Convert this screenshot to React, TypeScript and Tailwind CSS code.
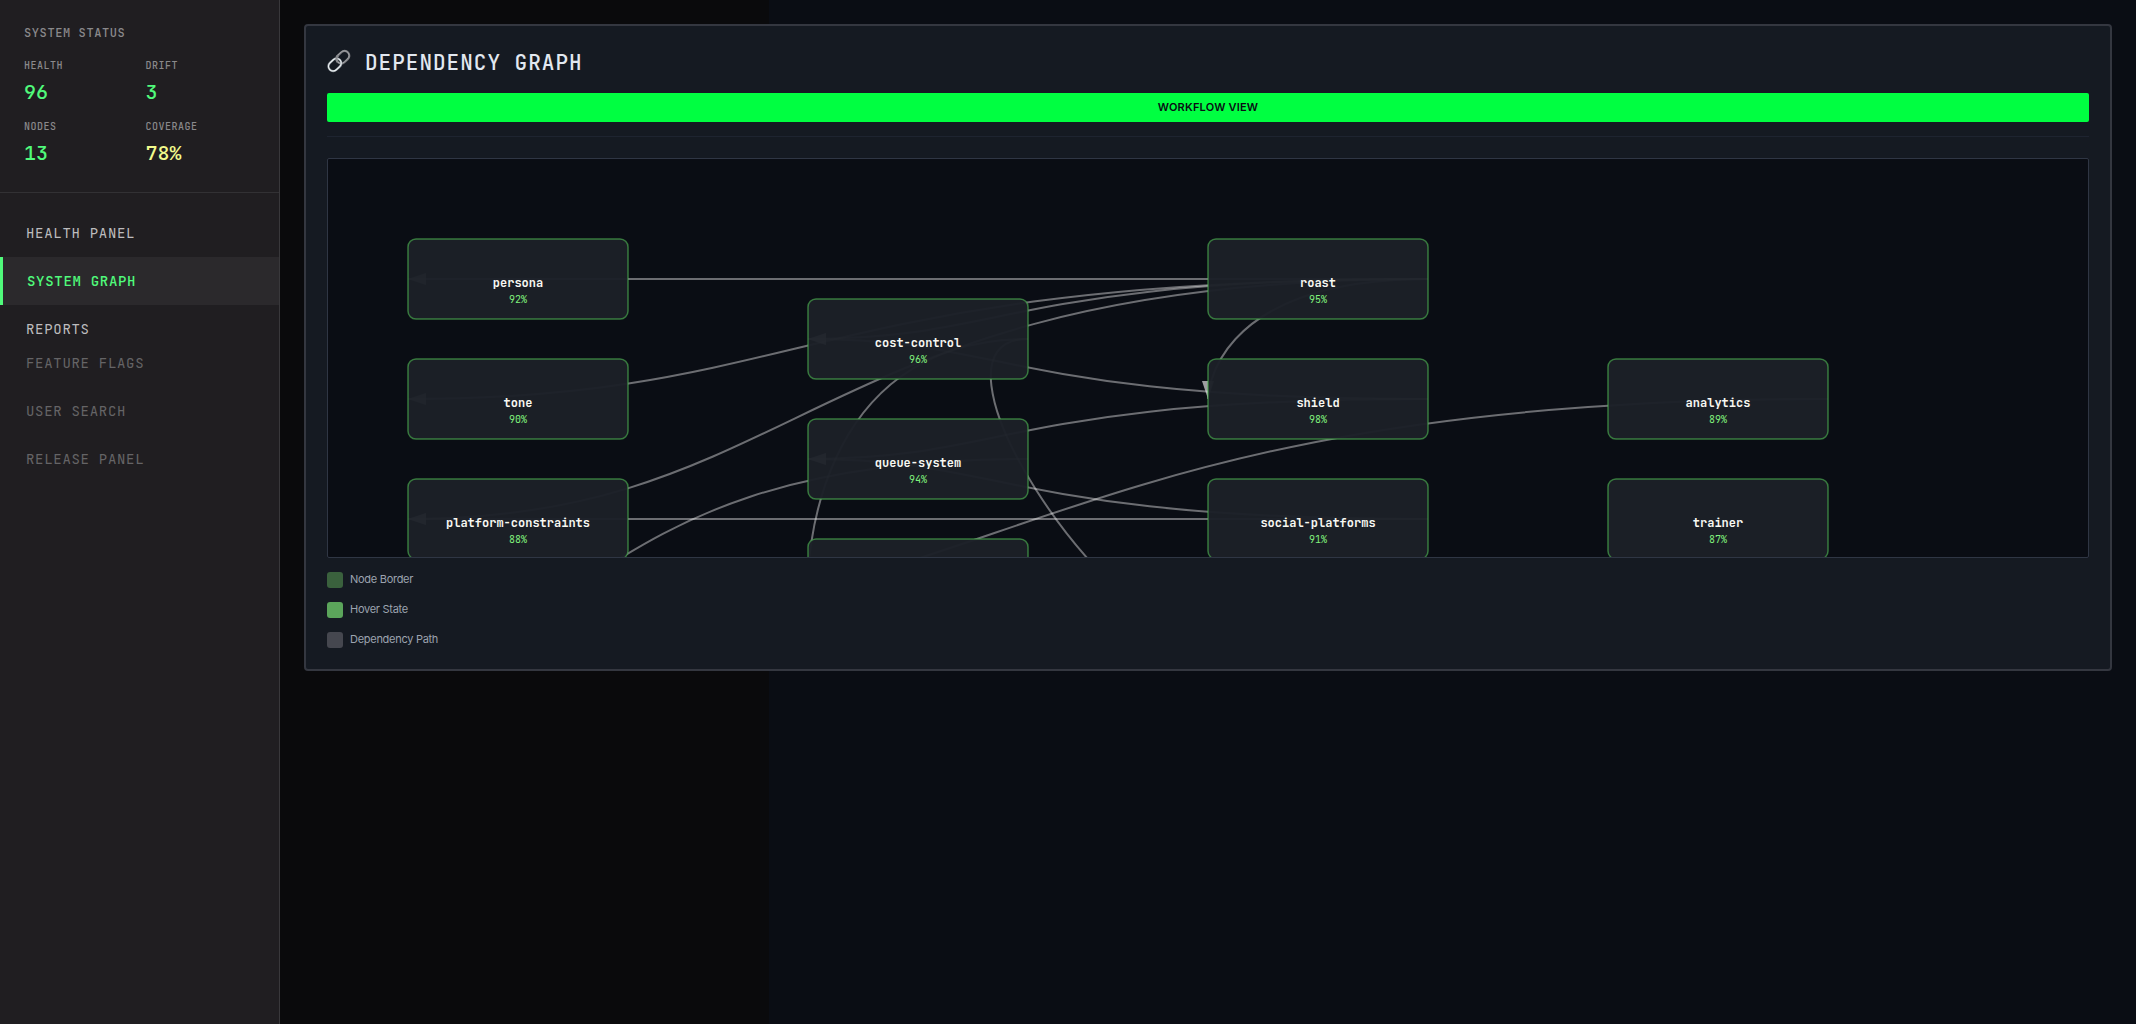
const edges: string[] = [
  "M1100 120C480 120 480 120 80 120",
  "M1100 120C480 120 480 240 80 240",
  "M1100 120C480 120 480 360 80 360",
  "M1100 120C680 120 680 180 480 180",
  "M1100 120C880 120 880 240 880 240",
  "M1100 240C680 240 680 180 480 180",
  "M1100 240C680 240 680 300 480 300",
  "M1100 360C680 360 680 300 480 300",
  "M1100 360C480 360 480 360 80 360",
  "M1500 240C680 240 680 480 80 480",
  "M700 300C280 300 280 480 80 480",
  "M700 180C480 180 480 420 480 420",
  "M700 180C580 180 780 480 880 480",
];

const nodes = [
  { id: "persona", score: "92%", x: 80, y: 80 },
  { id: "tone", score: "90%", x: 80, y: 200 },
  { id: "platform-constraints", score: "88%", x: 80, y: 320 },
  { id: "cost-control", score: "96%", x: 480, y: 140 },
  { id: "queue-system", score: "94%", x: 480, y: 260 },
  { id: "", score: "", x: 480, y: 380 },
  { id: "roast", score: "95%", x: 880, y: 80 },
  { id: "shield", score: "98%", x: 880, y: 200 },
  { id: "social-platforms", score: "91%", x: 880, y: 320 },
  { id: "analytics", score: "89%", x: 1280, y: 200 },
  { id: "trainer", score: "87%", x: 1280, y: 320 },
];

const stats = [
  { label: "HEALTH", value: "96", color: "text-[#50fa7b]" },
  { label: "DRIFT", value: "3", color: "text-[#50fa7b]" },
  { label: "NODES", value: "13", color: "text-[#50fa7b]" },
  { label: "COVERAGE", value: "78%", color: "text-[#f1fa8c]" },
];

const legend = [
  { label: "Node Border", color: "bg-[#3a613d]" },
  { label: "Hover State", color: "bg-[#5ba55b]" },
  { label: "Dependency Path", color: "bg-[#45474f]" },
];

function Sidebar() {
  return (
    <aside className="flex w-[280px] shrink-0 flex-col border-r border-[#39383b] bg-[#201e21] font-['JetBrains_Mono','DejaVu_Sans_Mono',monospace]">
      <section className="h-[193px] border-b border-[#323134] px-6 pt-6">
        <h2 className="text-[12px] font-medium leading-[18px] tracking-[0.6px] text-[#8a898b]">SYSTEM STATUS</h2>
        <div className="mt-3 grid grid-cols-[109.5px_1fr] gap-x-3 gap-y-[11px]">
          {stats.map((s) => (
            <div key={s.label} className="flex h-[50px] flex-col">
              <span className="mt-1 text-[10px] font-medium leading-4 tracking-[0.5px] text-[#8a898b]">{s.label}</span>
              <span className={`mt-1 text-[20px] font-medium leading-7 ${s.color}`}>{s.value}</span>
            </div>
          ))}
        </div>
      </section>
      <nav className="flex flex-col pt-4 text-[14px] tracking-[0.7px]">
        <a className="flex h-12 items-center px-[26px] text-[#bdbcbe]">HEALTH PANEL</a>
        <a className="flex h-12 items-center border-l-[3px] border-[#50fa7b] bg-[#2b292c] px-6 font-medium text-[#50fa7b]">SYSTEM GRAPH</a>
        <a className="flex h-12 items-center px-[26px] text-[#bdbcbe]">REPORTS</a>
        <div className="-mt-[14px] flex flex-col text-[#656466]">
          <a className="flex h-12 items-center px-[26px]">FEATURE FLAGS</a>
          <a className="flex h-12 items-center px-[26px]">USER SEARCH</a>
          <a className="flex h-12 items-center px-[26px]">RELEASE PANEL</a>
        </div>
      </nav>
    </aside>
  );
}

function LinkIcon() {
  return (
    <svg className="mb-[4px] size-6 overflow-visible" viewBox="0 0 24 24" fill="none">
      <g transform="rotate(-43 12 12)">
        <rect x="10.4" y="7.2" width="14" height="9.4" rx="4.7" stroke="#737478" strokeWidth="2.3" />
        <rect x="10.4" y="7" width="14" height="9.4" rx="4.7" stroke="#a9abaf" strokeWidth="0.9" />
        <rect x="-0.6" y="7.2" width="14" height="9.4" rx="4.7" stroke="#8d959b" strokeWidth="2.3" />
        <rect x="-0.6" y="7.2" width="14" height="9.4" rx="4.7" stroke="#eef2f4" strokeWidth="1.1" />
        <path d="M10.4 11.9a4.7 4.7 0 0 1 4.7-4.7" stroke="#8a8c90" strokeWidth="2.2" />
      </g>
    </svg>
  );
}

function Graph() {
  return (
    <div className="mt-[21px] h-[400px] overflow-hidden rounded-[2px] border border-[#2f3644] bg-[#0a0d14]">
      <svg width="1760" height="640" viewBox="0 0 1760 640" fill="none" className="block max-w-none">
        <defs>
          <marker id="arrow" markerWidth="9" markerHeight="6" refX="9" refY="3" orient="auto">
            <path d="M0 0L9 3L0 6Z" fill="#fff" fillOpacity="0.6" />
          </marker>
        </defs>
        {edges.map((d) => (
          <path key={d} d={d} stroke="#fff" strokeOpacity="0.4" strokeWidth="2" markerEnd="url(#arrow)" />
        ))}
        {nodes.map((n) => (
          <g key={`${n.x}-${n.y}`} className="font-['JetBrains_Mono','DejaVu_Sans_Mono',monospace]" textAnchor="middle">
            <rect x={n.x} y={n.y} width="220" height="80" rx="8" fill="#1c2027" fillOpacity="0.97" stroke="#4caf50" strokeOpacity="0.66" strokeWidth="1.5" />
            <text x={n.x + 110} y={n.y + 48} fontSize="12" fontWeight="600" fill="#f8f8f2">{n.id}</text>
            <text x={n.x + 110} y={n.y + 64} fontSize="10" fill="#80f07c">{n.score}</text>
          </g>
        ))}
      </svg>
    </div>
  );
}

export default function App() {
  return (
    <div className="flex h-[1024px] w-[2136px] overflow-hidden bg-[linear-gradient(90deg,#0a0a0c_769px,#0a0d14_769px)]">
      <Sidebar />
      <main className="flex-1 p-6">
        <section className="h-[647px] rounded-[4px] border-2 border-[#343740] bg-[#151a22] px-[21px] pt-[21px]">
          <header className="flex h-8 items-center gap-[14px]">
            <LinkIcon />
            <h1 className="font-['JetBrains_Mono','DejaVu_Sans_Mono',monospace] text-[21px] font-medium tracking-[1px] text-[#e2e8f0]">DEPENDENCY GRAPH</h1>
          </header>
          <button className="mt-[14px] flex h-[29px] w-full items-center justify-center rounded-[2px] bg-[#00ff41] font-[Inter,sans-serif] text-[11px] font-semibold tracking-[0.2px] text-[#0a0d14]">
            WORKFLOW VIEW
          </button>
          <hr className="mt-[14px] border-[#1e2430]" />
          <Graph />
          <ul className="mt-[14px] flex flex-col gap-[14px] font-[Inter,sans-serif] text-[11px] tracking-[-0.28px] text-[#9ca3af]">
            {legend.map((l) => (
              <li key={l.label} className="flex h-4 items-center gap-[7px]">
                <span className={`size-4 rounded-[3px] ${l.color}`} />
                <span className="mb-px">{l.label}</span>
              </li>
            ))}
          </ul>
        </section>
      </main>
    </div>
  );
}
